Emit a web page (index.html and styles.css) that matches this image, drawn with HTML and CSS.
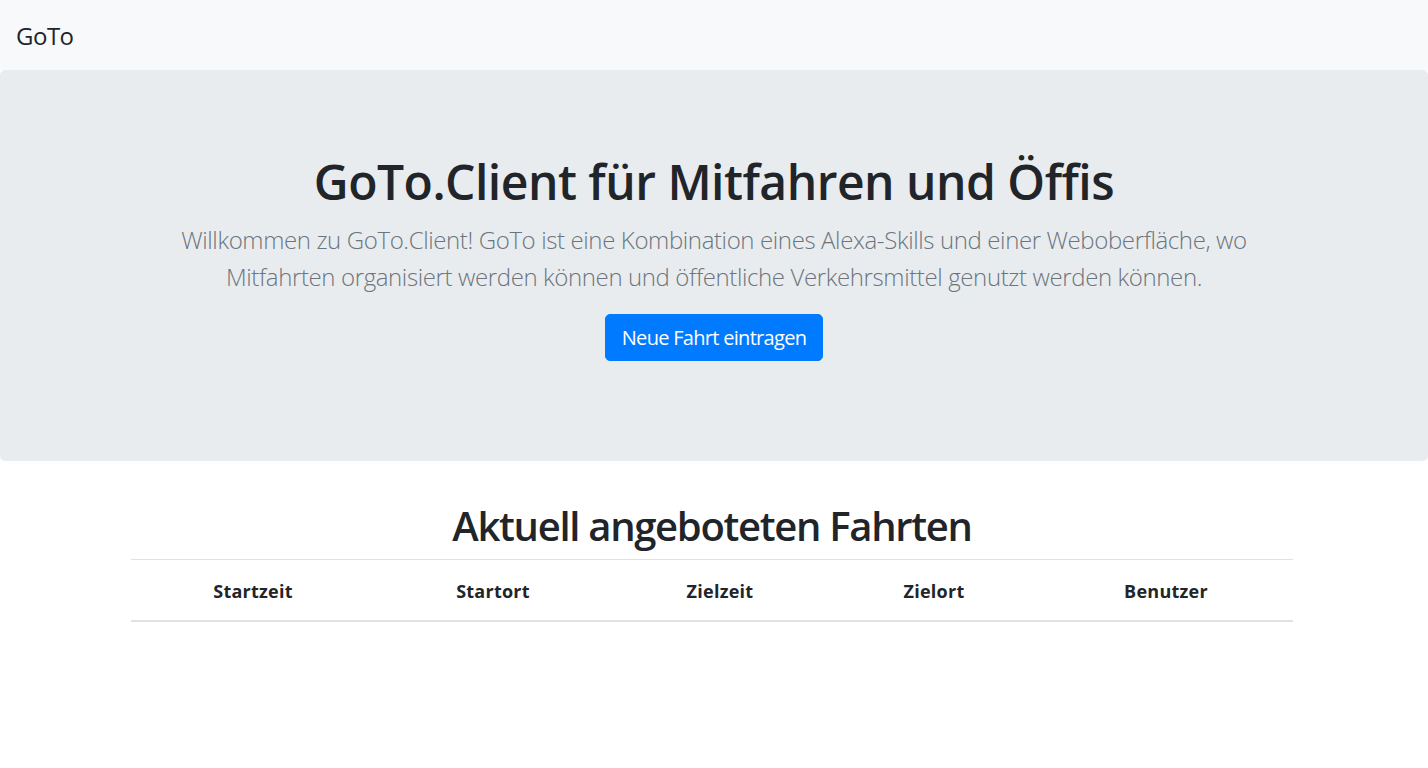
FILE: index.html
```html
<!DOCTYPE html>
<html lang="de">
<head>
<meta charset="utf-8">
<title>GoTo.Client</title>
<link rel="stylesheet" href="styles.css">
</head>
<body>
<nav class="navbar">
  <a class="brand" href="#">GoTo</a>
</nav>
<header class="jumbotron">
  <h1 class="jumbo-title">GoTo.Client für Mitfahren und Öffis</h1>
  <p class="lead">Willkommen zu GoTo.Client! GoTo ist eine Kombination eines Alexa-Skills und einer Weboberfläche, wo Mitfahrten organisiert werden können und öffentliche Verkehrsmittel genutzt werden können.</p>
  <a class="btn-primary" href="#">Neue Fahrt eintragen</a>
</header>
<main class="container">
  <h2 class="section-title">Aktuell angeboteten Fahrten</h2>
  <table class="rides">
    <colgroup>
      <col class="c1"><col class="c2"><col class="c3"><col class="c4"><col class="c5">
    </colgroup>
    <thead>
      <tr>
        <th>Startzeit</th>
        <th>Startort</th>
        <th>Zielzeit</th>
        <th>Zielort</th>
        <th>Benutzer</th>
      </tr>
    </thead>
    <tbody></tbody>
  </table>
</main>
</body>
</html>
```
FILE: styles.css
```css
* { box-sizing: border-box; }
html, body { margin: 0; padding: 0; }
body {
  font-family: "Open Sans", "Noto Sans", "DejaVu Sans", sans-serif;
  color: #212529;
  background: #fff;
  font-size: 16px;
}
.navbar {
  background: #f8f9fa;
  height: 70px;
  padding: 18px 16px 16px 16px;
  display: flex;
  align-items: flex-start;
}
.brand {
  font-size: 24px;
  line-height: 36px;
  color: #212529;
  text-decoration: none;
  letter-spacing: -0.5px;
}
.jumbotron {
  background: #e9ecef;
  border-radius: 5px;
  padding: 83px 32px 97px;
  height: 391px;
  text-align: center;
}
.jumbo-title {
  margin: 0 0 10px;
  font-size: 48px;
  line-height: 58px;
  font-weight: 600;
  letter-spacing: -0.5px;
  color: #212529;
}
.lead {
  margin: 0 auto 19px;
  max-width: 1110px;
  font-size: 24px;
  line-height: 37px;
  font-weight: 300;
  color: #6c757d;
  letter-spacing: -0.38px;
}
.btn-primary {
  display: inline-block;
  background: #007bff;
  border: 1px solid #007bff;
  color: #fff;
  font-size: 20px;
  line-height: 29px;
  padding: 8px 16px;
  border-radius: 5px;
  text-decoration: none;
  letter-spacing: -0.7px;
}
.container {
  width: 1166px;
  margin: 0 auto;
  padding: 39px 4px 0 0;
}
.section-title {
  margin: 0 0 8px;
  font-size: 40px;
  line-height: 51px;
  font-weight: 600;
  text-align: center;
  letter-spacing: -1.3px;
}
.rides {
  width: 100%;
  border-collapse: collapse;
  table-layout: fixed;
}
.c1 { width: 244px; }
.c2 { width: 236px; }
.c3 { width: 218px; }
.c4 { width: 210px; }
.c5 { width: 254px; }
.rides th {
  border-top: 1px solid #dee2e6;
  border-bottom: 2px solid #dee2e6;
  padding: 17px 12px 15px;
  font-size: 18px;
  line-height: 28px;
  font-weight: 700;
  text-align: center;
  letter-spacing: 0.25px;
}
```
